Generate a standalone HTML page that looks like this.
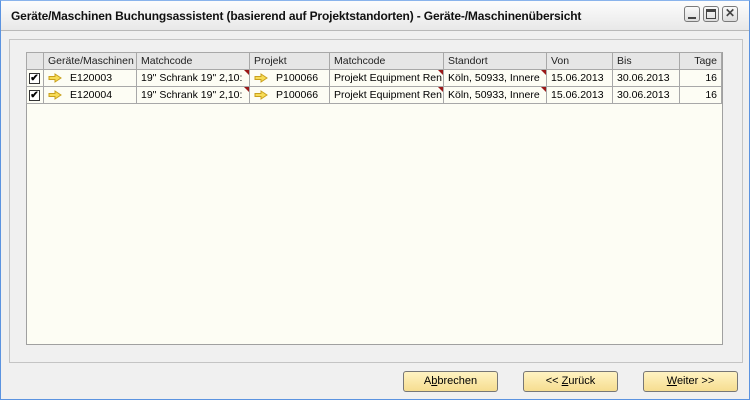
<!DOCTYPE html>
<html><head><meta charset="utf-8"><style>
*{margin:0;padding:0;box-sizing:border-box}
body{width:750px;height:400px;overflow:hidden;background:#f0f0f0;font-family:"Liberation Sans",Tahoma,sans-serif;font-size:11px;color:#000;position:relative}
.win{position:absolute;left:0;top:0;width:750px;height:400px;border:1px solid #5b93e0;border-top-color:#8ab4ec;background:#f0f0f0}
.title{position:absolute;left:0;top:0;width:748px;height:30px;background:linear-gradient(#fdfdfd,#e8e8e8);border-bottom:1px solid #b8b8b8}
.title span{position:absolute;left:10px;top:8px;font-weight:bold;font-size:12px;letter-spacing:-0.15px;color:#111}
.wb{position:absolute;top:5px;width:16px;height:16px;border:1px solid #7a7a7a;border-radius:3px;background:linear-gradient(#fafafa,#dcdcdc)}
.panel{position:absolute;left:8px;top:38px;width:734px;height:324px;border:1px solid #c4c4c4}
table{position:absolute;left:25px;top:51px;border-collapse:collapse;table-layout:fixed;width:696px}
td{border:1px solid #a8a8a8;height:17px;padding:0 4px;white-space:nowrap;overflow:hidden;background:#fdfdf4;position:relative;font-size:10.5px}
tr.h td{background:#e6e6e6;color:#222;height:17px}
.tb{position:absolute;left:25px;top:51px;width:697px;height:293px;border:1px solid #a0a0a0;background:#fdfdf4}
.chk{display:inline-block;width:11px;height:11px;border:1px solid #333;background:#fff;font-size:10px;line-height:9px;text-align:center;font-weight:bold;vertical-align:middle}
.arr{display:inline-block;vertical-align:middle;margin-right:8px}
.tri{position:absolute;right:0;top:0;width:0;height:0;border-top:5px solid #9a1818;border-left:5px solid transparent}
.btn{position:absolute;top:370px;width:95px;height:21px;border:1px solid #777;border-radius:3px;background:linear-gradient(#fff3c2,#f6dd90);text-align:center;line-height:19px;font-size:11px}
</style></head><body>
<div class="win">
<div class="title"><span>Geräte/Maschinen Buchungsassistent (basierend auf Projektstandorten) - Geräte-/Maschinenübersicht</span>
<div class="wb" style="left:683px"><div style="position:absolute;left:3px;top:10px;width:8px;height:2px;background:#444"></div></div>
<div class="wb" style="left:702px"><div style="position:absolute;left:2px;top:2px;width:10px;height:10px;border:1px solid #444;border-top-width:3px"></div></div>
<div class="wb" style="left:721px;text-align:center;font-weight:bold;line-height:13px;font-size:12px;color:#444">✕</div>
</div>
<div class="panel"></div>
<div class="tb"></div>
<table>
<colgroup><col style="width:17px"><col style="width:93px"><col style="width:113px"><col style="width:80px"><col style="width:114px"><col style="width:103px"><col style="width:66px"><col style="width:67px"><col style="width:42px"></colgroup>
<tr class="h"><td></td><td>Geräte/Maschinen</td><td>Matchcode</td><td>Projekt</td><td>Matchcode</td><td>Standort</td><td>Von</td><td>Bis</td><td style="text-align:right">Tage</td></tr>
<tr><td style="padding:0 2px"><span class="chk">✔</span></td><td><svg class="arr" width="14" height="10" viewBox="0 0 14 10"><path d="M1 3.5H7V1L13 5L7 9V6.5H1Z" fill="#f7dc55" stroke="#c9a01c" stroke-width="1"/></svg>E120003</td><td>19" Schrank 19" 2,10:<span class="tri"></span></td><td><svg class="arr" width="14" height="10" viewBox="0 0 14 10"><path d="M1 3.5H7V1L13 5L7 9V6.5H1Z" fill="#f7dc55" stroke="#c9a01c" stroke-width="1"/></svg>P100066</td><td>Projekt Equipment Ren<span class="tri"></span></td><td>Köln, 50933, Innere<span class="tri"></span></td><td>15.06.2013</td><td>30.06.2013</td><td style="text-align:right">16</td></tr>
<tr><td style="padding:0 2px"><span class="chk">✔</span></td><td><svg class="arr" width="14" height="10" viewBox="0 0 14 10"><path d="M1 3.5H7V1L13 5L7 9V6.5H1Z" fill="#f7dc55" stroke="#c9a01c" stroke-width="1"/></svg>E120004</td><td>19" Schrank 19" 2,10:<span class="tri"></span></td><td><svg class="arr" width="14" height="10" viewBox="0 0 14 10"><path d="M1 3.5H7V1L13 5L7 9V6.5H1Z" fill="#f7dc55" stroke="#c9a01c" stroke-width="1"/></svg>P100066</td><td>Projekt Equipment Ren<span class="tri"></span></td><td>Köln, 50933, Innere<span class="tri"></span></td><td>15.06.2013</td><td>30.06.2013</td><td style="text-align:right">16</td></tr>
</table>
<div class="btn" style="left:402px">A<u>b</u>brechen</div>
<div class="btn" style="left:522px">&lt;&lt; <u>Z</u>urück</div>
<div class="btn" style="left:642px"><u>W</u>eiter &gt;&gt;</div>
</div>
</body></html>
